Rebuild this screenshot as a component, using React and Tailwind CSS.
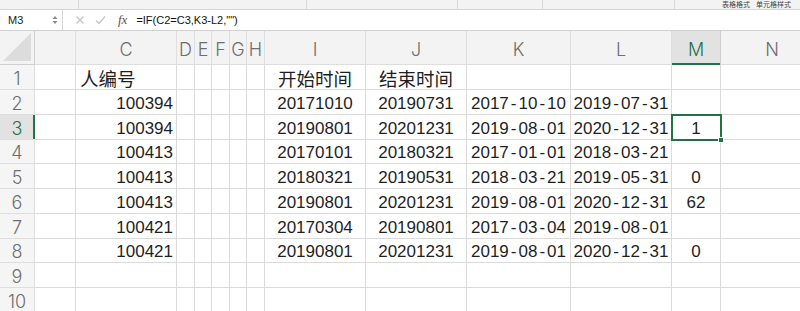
import React from "react";

const cols = ["", "", "C", "D", "E", "F", "G", "H", "I", "J", "K", "L", "M", "N"];

const data = [
  { c: "人编号", i: "开始时间", j: "结束时间", k: "", l: "", m: "", head: true },
  { c: "100394", i: "20171010", j: "20190731", k: "2017-10-10", l: "2019-07-31", m: "" },
  { c: "100394", i: "20190801", j: "20201231", k: "2019-08-01", l: "2020-12-31", m: "1" },
  { c: "100413", i: "20170101", j: "20180321", k: "2017-01-01", l: "2018-03-21", m: "" },
  { c: "100413", i: "20180321", j: "20190531", k: "2018-03-21", l: "2019-05-31", m: "0" },
  { c: "100413", i: "20190801", j: "20201231", k: "2019-08-01", l: "2020-12-31", m: "62" },
  { c: "100421", i: "20170304", j: "20190801", k: "2017-03-04", l: "2019-08-01", m: "" },
  { c: "100421", i: "20190801", j: "20201231", k: "2019-08-01", l: "2020-12-31", m: "0" },
  { c: "", i: "", j: "", k: "", l: "", m: "" },
  { c: "", i: "", j: "", k: "", l: "", m: "" },
];

const hdrFont = { fontFamily: "Inter, 'Liberation Sans', sans-serif" };
const cellFont = { fontFamily: "'Liberation Sans', 'Noto Sans CJK SC', sans-serif" };
const cjkFont = { fontFamily: "'Noto Sans CJK SC', sans-serif" };

function DateText({ v }) {
  if (!v) return null;
  const parts = v.split("-");
  return (
    <span className="whitespace-nowrap">
      {parts.map((p, idx) => (
        <React.Fragment key={idx}>
          {idx > 0 && <span className="mx-[2px]">-</span>}
          {p}
        </React.Fragment>
      ))}
    </span>
  );
}

function Cell({ children, align = "center", className = "" }) {
  const j = align === "left" ? "justify-start pl-[4px]" : align === "right" ? "justify-end pr-[3px]" : "justify-center";
  return (
    <div className={`flex items-center ${j} border-r border-b border-[#dadada] text-[17px] text-[#1f1f1f] overflow-visible whitespace-nowrap leading-none pt-[2px] ${className}`} style={cellFont}>
      {children}
    </div>
  );
}

export default function App() {
  return (
    <div className="relative w-[800px] h-[311px] overflow-hidden bg-white">
      {/* top toolbar strip */}
      <div className="h-[10px] bg-[#f3f3f3] border-b border-[#d6d6d6] flex relative overflow-hidden">
        <div className="w-[79px] border-r border-[#d9d9d9]" />
        <div className="w-[228px] border-r border-[#d9d9d9]" />
        <div className="w-[151px] border-r border-[#d9d9d9]" />
        <div className="w-[85px] border-r border-[#d9d9d9]" />
        <div className="w-[132px] border-r border-[#d9d9d9]" />
        <div className="flex-1 relative">
          <div className="absolute left-[47px] top-[1px] text-[7px] leading-none text-[#444] whitespace-nowrap flex gap-[6px]" style={cjkFont}>
            <span>表格格式</span>
            <span>单元格样式</span>
          </div>
        </div>
      </div>

      {/* formula bar */}
      <div className="h-[21px] flex items-center border-b border-[#d0d0d0] bg-white">
        <div className="w-[63px] h-full flex items-center justify-between pl-[8px] pr-[4px] border-r border-[#d6d6d6]">
          <span className="text-[11px] text-[#222]" style={{ fontFamily: "'Liberation Sans', sans-serif" }}>M3</span>
          <svg width="6" height="10" viewBox="0 0 6 10">
            <polygon points="3,1 5.5,4 0.5,4" fill="#888" />
            <polygon points="3,9 5.5,6 0.5,6" fill="#888" />
          </svg>
        </div>
        <div className="w-[12px]" />
        <svg width="10" height="10" viewBox="0 0 10 10">
          <path d="M1.5 1.5 L8.5 8.5 M8.5 1.5 L1.5 8.5" stroke="#c4c4c4" strokeWidth="1.2" />
        </svg>
        <svg width="11" height="10" viewBox="0 0 11 10" className="ml-[10px]">
          <path d="M1 5.5 L4 8.5 L10 1.5" stroke="#c4c4c4" strokeWidth="1.2" fill="none" />
        </svg>
        <span className="ml-[12px] text-[13px] italic text-[#555]" style={{ fontFamily: "'Liberation Serif', serif" }}>fx</span>
        <span className="ml-[9px] text-[11px] text-[#111]" style={{ fontFamily: "'Liberation Sans', sans-serif" }}>=IF(C2=C3,K3-L2,"")</span>
      </div>

      {/* grid */}
      <div className="relative grid grid-cols-[35px_41px_101px_18px_17px_18px_17px_18px_101px_101px_104px_101px_49px_103px] grid-rows-[34px_25px_25px_25px_24px_25px_25px_25px_24px_25px_25px]">
        {cols.map((c, idx) =>
          idx === 0 ? (
            <div key="corner" className="relative bg-[#f3f3f3] border-r border-b border-[#cfcfcf]">
              <svg width="30" height="30" viewBox="0 0 30 30" className="absolute right-[2px] bottom-[2px]">
                <polygon points="29,1 29,29 1,29" fill="#dcdcdc" />
              </svg>
            </div>
          ) : (
            <div
              key={"h" + idx}
              className={`relative flex items-center justify-center pt-[3px] text-[18px] font-light border-r border-b ${
                c === "M" ? "bg-[#e2e2e2] text-[#217346] border-[#cfcfcf]" : "bg-[#f3f3f3] text-[#6e6e6e] border-[#dedede]"
              }`}
              style={hdrFont}
            >
              {c}
              {c === "M" && <div className="absolute left-0 right-0 bottom-[-1px] h-[2px] bg-[#217346]" />}
            </div>
          )
        )}

        {data.map((r, ri) => {
          const rowNum = ri + 1;
          const sel = rowNum === 3;
          return (
            <React.Fragment key={"r" + ri}>
              <div
                className={`relative flex items-center justify-center pt-[2px] text-[18px] font-light border-r border-b border-[#dedede] ${
                  sel ? "bg-[#e2e2e2] text-[#217346]" : "bg-[#f5f5f5] text-[#6e6e6e]"
                }`}
                style={hdrFont}
              >
                {rowNum}
                {sel && <div className="absolute top-0 bottom-0 right-[-1px] w-[2px] bg-[#217346]" />}
              </div>
              <Cell />
              {r.head ? (
                <Cell align="left">
                  <span className="text-[18.5px]" style={cjkFont}>{r.c}</span>
                </Cell>
              ) : (
                <Cell align="right">{r.c}</Cell>
              )}
              <Cell />
              <Cell />
              <Cell />
              <Cell />
              <Cell />
              {r.head ? (
                <Cell>
                  <span className="text-[18.5px]" style={cjkFont}>{r.i}</span>
                </Cell>
              ) : (
                <Cell>{r.i}</Cell>
              )}
              {r.head ? (
                <Cell>
                  <span className="text-[18.5px]" style={cjkFont}>{r.j}</span>
                </Cell>
              ) : (
                <Cell>{r.j}</Cell>
              )}
              <Cell>
                <DateText v={r.k} />
              </Cell>
              <Cell>
                <DateText v={r.l} />
              </Cell>
              <Cell>{r.m}</Cell>
              <Cell />
            </React.Fragment>
          );
        })}

        <div className="absolute left-[671px] top-[83px] w-[51px] h-[27px] border-2 border-[#217346] pointer-events-none">
          <div className="absolute right-[-4px] bottom-[-4px] w-[6px] h-[6px] bg-[#217346] border border-white" />
        </div>
      </div>
    </div>
  );
}
